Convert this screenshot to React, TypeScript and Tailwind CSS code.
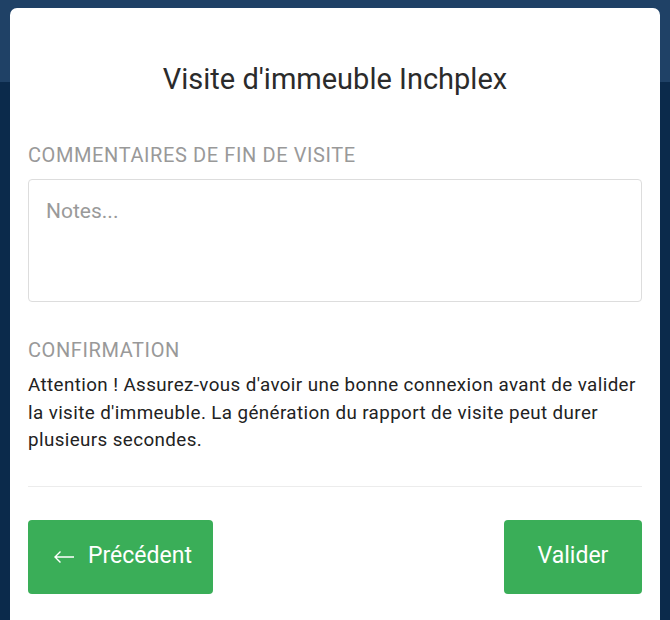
import React from "react";

export default function App() {
  return (
    <div
      className="relative w-[670px] h-[620px] overflow-hidden bg-[#0b2a4b]"
      style={{ fontFamily: "Roboto, 'Liberation Sans', sans-serif" }}
    >
      <div className="absolute left-0 top-0 w-full h-[82px] bg-[#1f4166]" />
      <div className="relative pt-[8px] px-[10px] h-full">
        <div className="bg-white rounded-t-[7px] h-[640px] px-[18px]">
          <h1 className="pt-[53px] text-center text-[29px] leading-[36px] text-[#2b2b2b] font-normal">
            Visite d'immeuble Inchplex
          </h1>
          <div className="mt-[46px] text-[20px] leading-[24px] tracking-[0.6px] text-[#999999]">
            COMMENTAIRES DE FIN DE VISITE
          </div>
          <textarea
            placeholder="Notes..."
            className="mt-[12px] block w-full h-[123px] border border-[#dddddd] rounded-[4px] px-[17px] py-[17px] text-[21px] leading-[28px] placeholder:text-[#9a9a9a] resize-none outline-none"
          />
          <div className="mt-[36px] text-[20px] leading-[24px] tracking-[0.6px] text-[#999999]">
            CONFIRMATION
          </div>
          <p className="mt-[10px] text-[18.8px] leading-[27.5px] tracking-[0.4px] text-[#222222]">
            Attention ! Assurez-vous d'avoir une bonne connexion avant de valider la visite d'immeuble. La génération du rapport de visite peut durer plusieurs secondes.
          </p>
          <div className="mt-[31px] h-px bg-[#ececec]" />
          <div className="mt-[33px] flex justify-between">
            <button className="h-[74px] w-[185px] rounded-[4px] bg-[#3aae58] text-white text-[23px] flex items-center pl-[25px] gap-[14px]">
              <svg width="21" height="14" viewBox="0 0 21 14" fill="none" stroke="white" strokeWidth="1.4">
                <path d="M21 7H2M7.5 1.5L2 7l5.5 5.5" />
              </svg>
              <span>Précédent</span>
            </button>
            <button className="h-[74px] w-[138px] rounded-[4px] bg-[#3aae58] text-white text-[23px] flex items-center justify-center">
              Valider
            </button>
          </div>
        </div>
      </div>
    </div>
  );
}
